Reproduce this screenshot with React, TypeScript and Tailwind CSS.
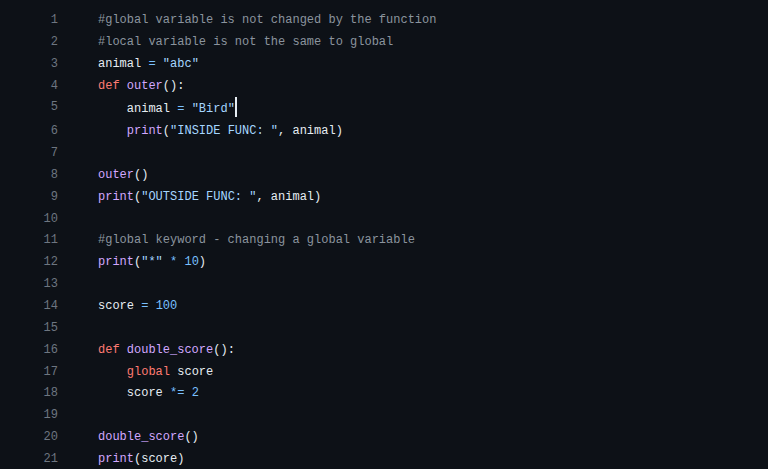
const C = {
  txt: 'text-[#e6edf3]',
  cmt: 'text-[#8b949e]',
  kw: 'text-[#ff7b72]',
  fn: 'text-[#d2a8ff]',
  str: 'text-[#a5d6ff]',
  num: 'text-[#79c0ff]',
  op: 'text-[#79c0ff]',
};

type Tok = [string, keyof typeof C];

const lines: Tok[][] = [
  [['#global variable is not changed by the function', 'cmt']],
  [['#local variable is not the same to global', 'cmt']],
  [['animal ', 'txt'], ['=', 'op'], [' ', 'txt'], ['"abc"', 'str']],
  [['def', 'kw'], [' ', 'txt'], ['outer', 'fn'], ['():', 'txt']],
  [['    animal ', 'txt'], ['=', 'op'], [' ', 'txt'], ['"Bird"', 'str']],
  [['    ', 'txt'], ['print', 'fn'], ['(', 'txt'], ['"INSIDE FUNC: "', 'str'], [', animal)', 'txt']],
  [],
  [['outer', 'fn'], ['()', 'txt']],
  [['print', 'fn'], ['(', 'txt'], ['"OUTSIDE FUNC: "', 'str'], [', animal)', 'txt']],
  [],
  [['#global keyword - changing a global variable', 'cmt']],
  [['print', 'fn'], ['(', 'txt'], ['"*"', 'str'], [' ', 'txt'], ['*', 'op'], [' ', 'txt'], ['10', 'num'], [')', 'txt']],
  [],
  [['score ', 'txt'], ['=', 'op'], [' ', 'txt'], ['100', 'num']],
  [],
  [['def', 'kw'], [' ', 'txt'], ['double_score', 'fn'], ['():', 'txt']],
  [['    ', 'txt'], ['global', 'kw'], [' score', 'txt']],
  [['    score ', 'txt'], ['*=', 'op'], [' ', 'txt'], ['2', 'num']],
  [],
  [['double_score', 'fn'], ['()', 'txt']],
  [['print', 'fn'], ['(', 'txt'], ['score', 'txt'], [')', 'txt']],
];

export default function App() {
  return (
    <div className="w-[768px] h-[469px] overflow-hidden bg-[#0d1117] pt-[10px] font-['Liberation_Mono',monospace] text-[12px] leading-[21.85px]">
      {lines.map((toks, i) => (
        <div key={i} className="flex whitespace-pre">
          <div className="w-[58px] shrink-0 text-right text-[#6e7681]">{i + 1}</div>
          <div className="pl-[40px]">
            {toks.map(([t, c], j) => (
              <span key={j} className={C[c]}>{t}</span>
            ))}
            {i === 4 && (
              <span className="inline-block w-[2px] h-[20px] align-[-5px] bg-[#e6edf3]" />
            )}
          </div>
        </div>
      ))}
    </div>
  );
}
